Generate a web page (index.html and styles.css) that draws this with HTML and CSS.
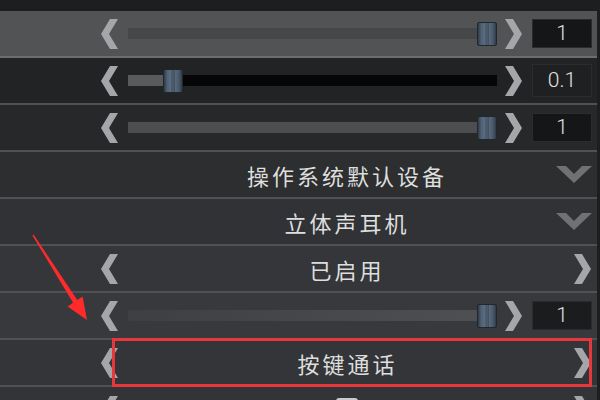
FILE: index.html
```html
<!DOCTYPE html>
<html lang="zh-CN">
<head>
    <meta charset="UTF-8">
    <meta name="viewport" content="width=device-width, initial-scale=1.0">
    <title>音频设置</title>
    <link rel="stylesheet" href="styles.css">
</head>
<body>
    <div class="panel">
        <!-- 主音量 -->
        <div class="row slider-row row-active">
            <span class="chev"><svg width="18" height="30" viewBox="0 0 18 30"><polygon points="10,0 18,0 9,15 18,30 10,30 1,15"/></svg></span>
            <div class="track">
                <div class="fill" style="width: calc((100% - 20px) * 1)"></div>
                <span class="thumb"></span>
            </div>
            <span class="chev"><svg width="18" height="30" viewBox="0 0 18 30"><polygon points="0,0 8,0 17,15 8,30 0,30 9,15"/></svg></span>
            <div class="value">1</div>
        </div>

        <div class="row slider-row row-2">
            <span class="chev"><svg width="18" height="30" viewBox="0 0 18 30"><polygon points="10,0 18,0 9,15 18,30 10,30 1,15"/></svg></span>
            <div class="track track-dark">
                <div class="fill" style="width: calc((100% - 20px) * 0.1)"></div>
                <span class="thumb"></span>
            </div>
            <span class="chev"><svg width="18" height="30" viewBox="0 0 18 30"><polygon points="0,0 8,0 17,15 8,30 0,30 9,15"/></svg></span>
            <div class="value value-plain">0.1</div>
        </div>

        <div class="row slider-row row-3">
            <span class="chev"><svg width="18" height="30" viewBox="0 0 18 30"><polygon points="10,0 18,0 9,15 18,30 10,30 1,15"/></svg></span>
            <div class="track">
                <div class="fill" style="width: calc((100% - 20px) * 1)"></div>
                <span class="thumb"></span>
            </div>
            <span class="chev"><svg width="18" height="30" viewBox="0 0 18 30"><polygon points="0,0 8,0 17,15 8,30 0,30 9,15"/></svg></span>
            <div class="value">1</div>
        </div>

        <!-- 设备选择 -->
        <div class="row choice-row row-4">
            <span class="chev"></span>
            <div class="choice-text">操作系统默认设备</div>
            <span class="chev chev-drop"><svg width="36" height="17" viewBox="0 0 36 17"><polygon points="0,0 10,0 18,8 26,0 36,0 18,17"/></svg></span>
        </div>

        <div class="row choice-row row-5">
            <span class="chev"></span>
            <div class="choice-text">立体声耳机</div>
            <span class="chev chev-drop"><svg width="36" height="17" viewBox="0 0 36 17"><polygon points="0,0 10,0 18,8 26,0 36,0 18,17"/></svg></span>
        </div>

        <div class="row choice-row row-6">
            <span class="chev"><svg width="18" height="30" viewBox="0 0 18 30"><polygon points="10,0 18,0 9,15 18,30 10,30 1,15"/></svg></span>
            <div class="choice-text">已启用</div>
            <span class="chev"><svg width="18" height="30" viewBox="0 0 18 30"><polygon points="0,0 8,0 17,15 8,30 0,30 9,15"/></svg></span>
        </div>

        <div class="row slider-row row-7">
            <span class="chev"><svg width="18" height="30" viewBox="0 0 18 30"><polygon points="10,0 18,0 9,15 18,30 10,30 1,15"/></svg></span>
            <div class="track track-faint">
                <div class="fill" style="width: calc((100% - 20px) * 1)"></div>
                <span class="thumb"></span>
            </div>
            <span class="chev"><svg width="18" height="30" viewBox="0 0 18 30"><polygon points="0,0 8,0 17,15 8,30 0,30 9,15"/></svg></span>
            <div class="value">1</div>
        </div>

        <div class="row choice-row row-8">
            <span class="chev"><svg width="18" height="30" viewBox="0 0 18 30"><polygon points="10,0 18,0 9,15 18,30 10,30 1,15"/></svg></span>
            <div class="choice-text">按键通话</div>
            <span class="chev"><svg width="18" height="30" viewBox="0 0 18 30"><polygon points="0,0 8,0 17,15 8,30 0,30 9,15"/></svg></span>
            <span class="mark-box"></span>
        </div>

        <div class="row choice-row row-9">
            <span class="chev"><svg width="18" height="30" viewBox="0 0 18 30"><polygon points="10,0 18,0 9,15 18,30 10,30 1,15"/></svg></span>
            <div class="choice-text"><span class="toggle"></span></div>
            <span class="chev"><svg width="18" height="30" viewBox="0 0 18 30"><polygon points="0,0 8,0 17,15 8,30 0,30 9,15"/></svg></span>
        </div>
    </div>

    <!-- 标注箭头 -->
    <svg class="mark-arrow" width="600" height="400" viewBox="0 0 600 400">
        <polygon points="32.4,235.4 73.1,302.7 67.6,306.4 87,320 82.6,296.6 77.3,300.1 33.6,234.6"/>
    </svg>
</body>
</html>
```

FILE: styles.css
```css
body {
    margin: 0;
    width: 600px;
    height: 400px;
    overflow: hidden;
    background-color: #1d1e20;
    font-family: "Noto Sans CJK SC", "Noto Sans", sans-serif;
    position: relative;
}
.panel {
    width: 597px;
    height: 400px;
    overflow: hidden;
    box-sizing: border-box;
    padding-top: 11px;
}
.row {
    box-sizing: border-box;
    height: 47px;
    border-bottom: 2px solid #4f5154;
    padding: 0 5px 0 100px;
    display: flex;
    align-items: center;
    position: relative;
}
.row-active {
    background-color: #525355;
    border-bottom-color: #6c6d6f;
}
.row-2 { background-color: #222325; }
.row-3 { background-color: #27282a; }
.row-4 { background-color: #2c2e30; }
.row-5 { background-color: #303235; }
.row-6 { background-color: #343639; }
.row-7 { background-color: #37393c; }
.row-8 { background-color: #333538; }
.row-9 { background-color: #323437; border-bottom: none; }

.chev {
    flex: none;
    width: 18px;
    height: 30px;
    display: flex;
    align-items: center;
}
.chev svg {
    fill: #a4a6a9;
}
.choice-row .chev:last-of-type {
    width: 19px;
    justify-content: flex-end;
}
.chev-drop svg {
    fill: #6f7173;
    flex: none;
}

/* slider */
.track {
    flex: 1;
    height: 11px;
    margin: 0 8px 0 10px;
    display: flex;
    align-items: center;
    background-color: #464749;
}
.track .fill {
    height: 100%;
    background-color: #464749;
}
.track-dark {
    background-color: #060606;
}
.track-dark .fill {
    background-color: #595a5c;
}
.row-3 .track,
.row-3 .track .fill {
    background-color: #4c4e50;
}
.track-faint .fill {
    background: linear-gradient(90deg, #3d3f42, #4d4f52);
}
.thumb {
    flex: none;
    box-sizing: border-box;
    width: 20px;
    height: 24px;
    border: 1px solid #20272e;
    border-radius: 2px;
    background: linear-gradient(90deg, #2f3a45 0%, #4f6174 18%, #5c6e81 40%, #36434f 44%, #5c6e81 50%, #36434f 56%, #586a7c 62%, #465668 85%, #2f3a45 100%);
}

.value {
    flex: none;
    box-sizing: border-box;
    width: 60px;
    height: 29px;
    margin-left: 9px;
    background-color: #151617;
    border: 1px solid #2b2c2e;
    color: #e4e4e4;
    font-family: Roboto, "Liberation Sans", sans-serif;
    font-weight: 300;
    font-size: 21px;
    line-height: 27px;
    text-align: center;
}
.value-plain {
    height: 33px;
    background-color: #1f2022;
    line-height: 31px;
}
.row-7 .value {
    background-color: #1b1c1e;
}

/* text choices */
.choice-text {
    flex: 1;
    text-align: center;
    color: #dedede;
    font-size: 22px;
    letter-spacing: 3px;
    text-indent: 3px;
    line-height: 30px;
}
.toggle {
    display: inline-block;
    width: 22px;
    height: 22px;
    margin-top: 2px;
    border-radius: 3px;
    background-color: #c9cacc;
    vertical-align: top;
}

/* annotations */
.mark-box {
    position: absolute;
    left: 112px;
    right: 5px;
    top: -2px;
    bottom: -2px;
    border: 3px solid #e8373c;
}
.mark-arrow {
    position: absolute;
    left: 0;
    top: 0;
    pointer-events: none;
}
.mark-arrow polygon {
    fill: #ff2b2b;
}
```
